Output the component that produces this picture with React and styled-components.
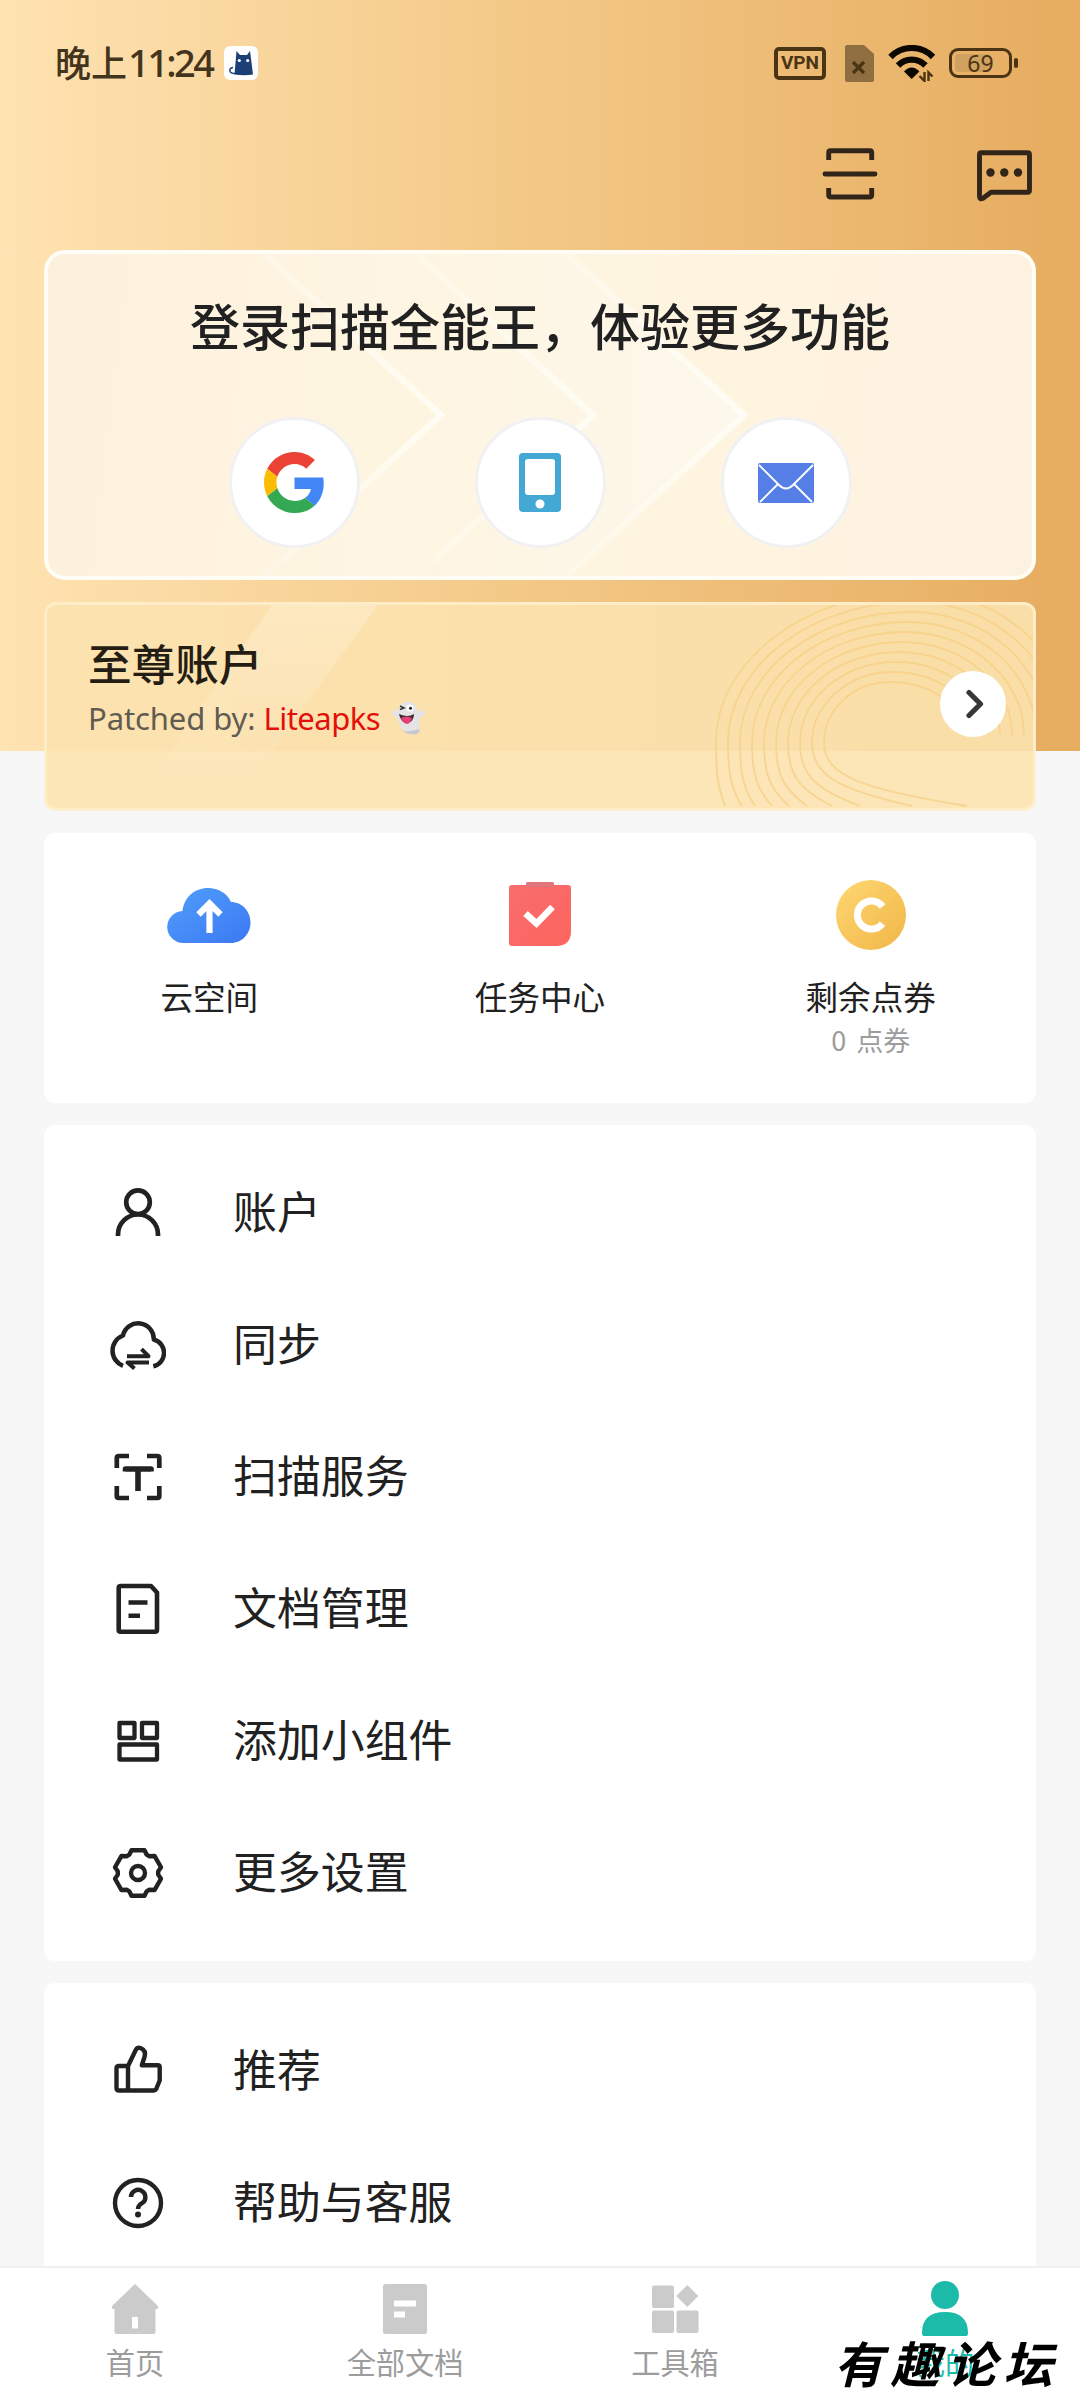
import React from "react";
import styled, { createGlobalStyle, css } from "styled-components";

const GlobalStyle = createGlobalStyle`
  * {
    box-sizing: border-box;
  }
  body {
    margin: 0;
    font-family: "Noto Sans CJK SC", "Noto Sans", sans-serif;
    color: #212121;
  }
  svg {
    display: block;
    flex: none;
  }
`;

const Screen = styled.div`
  position: relative;
  display: flex;
  flex-direction: column;
  width: 1080px;
  height: 2400px;
  overflow: hidden;
  background: linear-gradient(90deg, #ffe3b2 0%, #f3c886 50%, #e6ac60 100%) 0 0 /
    100% 751px no-repeat #f7f7f7;
`;

const StatusBar = styled.header`
  display: flex;
  align-items: center;
  height: 126px;
  padding: 0 62px 0 55px;
  color: #43341d;
`;

const Clock = styled.div`
  display: flex;
  align-items: center;
  font-size: 36px;
  font-weight: 500;
  line-height: 40px;
`;

const ClockText = styled.span`
  width: 169px;
  margin-top: -3px;
  white-space: nowrap;
`;

const ClockDigits = styled.span`
  margin-left: 1px;
  font-family: "Noto Sans", sans-serif;
  font-size: 38px;
  letter-spacing: -2.6px;
`;

const StatusIcons = styled.div`
  display: flex;
  align-items: center;
  margin-left: auto;
`;

const VpnBadge = styled.span`
  display: flex;
  align-items: center;
  justify-content: center;
  width: 52px;
  height: 33px;
  margin-right: 19px;
  border: 4px solid #4a3413;
  border-radius: 5px;
  color: #4a3413;
  font: 700 19px/20px "Roboto", sans-serif;
`;

const Battery = styled.span`
  position: relative;
  display: flex;
  align-items: center;
  justify-content: center;
  width: 63px;
  height: 30px;
  margin: 0 6px 0 13px;
  border: 3px solid #4a3413;
  border-radius: 9px;
  background: linear-gradient(90deg, #d0a15f 68%, transparent 68%) content-box;
  padding: 3px;
  font: 400 23px/24px "Noto Sans", sans-serif;
  color: #4a3413;

  &::after {
    content: "";
    position: absolute;
    right: -9px;
    top: 7px;
    width: 4px;
    height: 10px;
    border-radius: 2px;
    background: #4a3413;
  }
`;

const Toolbar = styled.div`
  display: flex;
  align-items: center;
  justify-content: flex-end;
  gap: 94px;
  height: 96px;
  padding-right: 46px;
`;

const Content = styled.main`
  flex: 1;
  min-height: 0;
  display: flex;
  flex-direction: column;
  gap: 22px;
  padding: 28px 44px 0;
  overflow: hidden;
`;

const Card = styled.section`
  flex: none;
  border-radius: 11px;
  background: #fff;
`;

const LoginCard = styled(Card)`
  position: relative;
  height: 330px;
  padding-top: 40px;
  border: 4px solid #fffdf6;
  border-radius: 21px;
  background: linear-gradient(97deg, #fdf1de 0%, #fef5e1 35%, #fef4e0 70%, #fdf1df 100%);
  overflow: hidden;
`;

const PremiumCard = styled(Card)`
  position: relative;
  height: 209px;
  padding: 29px 27px 0 41px;
  background: rgba(252, 226, 175, 0.907);
  border: 3px solid rgba(255, 240, 208, 0.75);
  border-radius: 12px;
  overflow: hidden;
`;

const CardArt = styled.svg`
  position: absolute;
  top: 0;
  left: 0;
`;

const LoginTitle = styled.h1`
  position: relative;
  margin: 0;
  font-size: 50px;
  font-weight: 500;
  line-height: 60px;
  text-align: center;
`;

const LoginOptions = styled.div`
  position: relative;
  display: flex;
  justify-content: center;
  gap: 115px;
  margin-top: 63px;
`;

const RoundButton = styled.button`
  display: flex;
  align-items: center;
  justify-content: center;
  width: 131px;
  height: 131px;
  padding: 0;
  border: 3px solid #f1f1f3;
  border-radius: 50%;
  background: #fff;
`;

const PremiumBody = styled.div`
  position: relative;
  display: flex;
  justify-content: space-between;
`;

const PremiumTitle = styled.h2`
  margin: 0;
  font-size: 43.6px;
  font-weight: 500;
  line-height: 56px;
  color: #241d14;
`;

const PatchedBy = styled.p`
  display: flex;
  align-items: center;
  margin: 4px 0 0;
  font-family: "Noto Sans", sans-serif;
  font-size: 31px;
  line-height: 48px;
  letter-spacing: -0.1px;
  white-space: pre;
  color: #625b51;

  b {
    font-weight: 400;
    letter-spacing: -0.5px;
    color: #e30f0a;
    margin-right: 10px;
  }
`;

const ArrowButton = styled.button`
  display: flex;
  align-items: center;
  justify-content: center;
  width: 66px;
  height: 66px;
  margin-top: 37px;
  padding: 0;
  border: 0;
  border-radius: 50%;
  background: #fff;
`;

const Services = styled(Card)`
  display: grid;
  grid-template-columns: repeat(3, 1fr);
  height: 270px;
  padding-top: 40px;
`;

const Service = styled.div`
  display: flex;
  flex-direction: column;
  align-items: center;
  font-size: 32.6px;
  line-height: 44px;

  svg {
    margin-bottom: 17px;
  }
  small {
    font-size: 27px;
    color: #9c9c9c;
    word-spacing: 4px;
  }
`;

const Menu = styled(Card)`
  padding: 22px 0;
`;

const MenuRow = styled.div`
  display: flex;
  align-items: center;
  height: 132px;
  padding-left: 66px;
  gap: 67px;
  font-size: 43.9px;
  line-height: 60px;

  span {
    margin-top: -6px;
  }
`;

const TabBar = styled.nav`
  flex: none;
  display: grid;
  grid-template-columns: repeat(4, 1fr);
  height: 134px;
  padding-top: 13px;
  border-top: 2px solid #efefef;
  background: #fff;
`;

const Tab = styled.div`
  display: flex;
  flex-direction: column;
  align-items: center;
  font-size: 29.2px;
  line-height: 40px;
  color: #9c9c9c;

  svg {
    fill: #cbcbcb;
    margin-bottom: 4px;
  }
  ${({ $active }) =>
    $active &&
    css`
      color: #1cbba9;
      svg {
        fill: #1cbba9;
      }
    `}
`;

const SiteMark = styled.div`
  position: absolute;
  right: 20px;
  bottom: 7px;
  font-size: 49px;
  font-weight: 700;
  font-style: italic;
  line-height: 62px;
  letter-spacing: 7.5px;
  color: #000;
`;

const Line = ({ children, size = 56, width = 4.4, ...rest }) => (
  <svg
    width={size}
    height={size}
    viewBox={`0 0 ${size} ${size}`}
    fill="none"
    stroke="#222"
    strokeWidth={width}
    strokeLinejoin="round"
    {...rest}
  >
    {children}
  </svg>
);

const AppBadge = () => (
  <svg width="34" height="34" viewBox="0 0 34 34">
    <rect width="34" height="34" rx="6" fill="#fff" />
    <path
      d="M12.500 5l3.500 4h7L26 5l.8 6L29 28.500q-9 1.500-18.500 0L12 11z"
      fill="#1c3f76"
    />
    <path d="M11 27.500c-6 0-7-5-2-6" fill="none" stroke="#1c3f76" strokeWidth="1.500" />
    <circle cx="15.300" cy="14.500" r="1.600" fill="#fff" />
    <circle cx="23.700" cy="14.500" r="1.600" fill="#fff" />
  </svg>
);

const SimIcon = () => (
  <svg width="29" height="37" viewBox="0 0 29 37">
    <path d="M2 0h17l10 9v26q0 2-2 2H2q-2 0-2-2V2q0-2 2-2z" fill="#8f6f42" />
    <path d="M8 17l11 11M19 17L8 28" stroke="#4a3413" strokeWidth="3.200" />
  </svg>
);

const WifiSvg = styled.svg`
  margin-left: 14px;
`;

const WifiIcon = () => (
  <WifiSvg width="48" height="37" viewBox="0 0 48 37">
    <g fill="none" stroke="#0c0701">
      <path d="M2.500 12A29.500 29.500 0 0 1 45 12" strokeWidth="6.200" />
      <path d="M10 20.500A19 19 0 0 1 37.500 20.500" strokeWidth="6.200" />
    </g>
    <path d="M16 26.500q7.700-8 15.400 0L23.700 34z" fill="#0c0701" />
    <path d="M36.500 27v9l-5-5M40.500 36v-8.500l4 4" fill="none" stroke="#4a3413" strokeWidth="2.400" />
  </WifiSvg>
);

const ScanIcon = () => (
  <Line size={60} width={4.900} stroke="#31251a">
    <path d="M8.700 16V8.700q0-2 2-2h39q2 0 2 2V16M8.700 44v7q0 2 2 2h39q2 0 2-2v-7" />
    <path d="M5 30h50" strokeLinecap="round" />
  </Line>
);

const ChatIcon = () => (
  <Line size={60} width={4.900} stroke="#31251a">
    <path d="M7.500 8.800h46q2 0 2 2v35.500q0 2-2 2H17l-8 6q-3.500 1.500-3.500-2V10.800q0-2 2-2z" />
    <g fill="#31251a" stroke="none">
      <circle cx="16.500" cy="28.500" r="4.200" />
      <circle cx="30.300" cy="28.500" r="4.200" />
      <circle cx="44" cy="28.500" r="4.200" />
    </g>
  </Line>
);

const GoogleIcon = () => (
  <svg width="61" height="61" viewBox="0 0 48 48">
    <path
      fill="#EA4335"
      d="M24 9.500c3.540 0 6.710 1.220 9.210 3.600l6.850-6.850C35.900 2.380 30.470 0 24 0 14.620 0 6.510 5.380 2.560 13.220l7.980 6.190C12.430 13.720 17.740 9.500 24 9.500z"
    />
    <path
      fill="#4285F4"
      d="M46.980 24.550c0-1.570-.15-3.090-.38-4.550H24v9.020h12.940c-.58 2.960-2.260 5.480-4.780 7.180l7.730 6c4.510-4.180 7.090-10.360 7.090-17.650z"
    />
    <path
      fill="#FBBC05"
      d="M10.530 28.590c-.48-1.450-.76-2.990-.76-4.590s.27-3.140.76-4.590l-7.980-6.190C.92 16.460 0 20.120 0 24c0 3.880.92 7.540 2.560 10.780l7.970-6.190z"
    />
    <path
      fill="#34A853"
      d="M24 48c6.480 0 11.930-2.130 15.890-5.810l-7.730-6c-2.150 1.450-4.920 2.300-8.160 2.300-6.260 0-11.570-4.220-13.470-9.910l-7.980 6.190C6.510 42.620 14.620 48 24 48z"
    />
  </svg>
);

// three stacked arrowheads behind the login card
const LoginArt = () => (
  <CardArt width="984" height="322" viewBox="48 254 984 322">
    <defs>
      <linearGradient id="sheen">
        <stop offset="0" stopColor="#fdf9ef" stopOpacity="0" />
        <stop offset="1" stopColor="#fdf9ef" stopOpacity=".85" />
      </linearGradient>
      <linearGradient id="edge" x1="0" y1="0" x2="0" y2="1">
        <stop offset="0" stopColor="#fffdf5" stopOpacity=".3" />
        <stop offset=".5" stopColor="#fffdf5" stopOpacity=".9" />
        <stop offset="1" stopColor="#fffdf5" stopOpacity=".25" />
      </linearGradient>
    </defs>
    <path d="M417 254h151l178 161-178 161H417l175-161z" fill="url(#sheen)" />
    <path d="M265 254h152l175 161-175 161H265l176-161z" fill="url(#sheen)" opacity=".3" />
    {[265, 417, 568].map((x) => (
      <path
        key={x}
        d={`M${x} 254l176 161-176 161`}
        fill="none"
        stroke="url(#edge)"
        strokeWidth="6.500"
      />
    ))}
  </CardArt>
);

const ringEnds = [923, 868, 816, 788, 763, 745, 728, 711, 698, 681];

const ringPath = (end, i) => {
  const left = 780 - 12 * i;
  const right = 920 + 12 * i;
  const top = 80 - 10 * i;
  const cx = 846 + 3 * i;
  return `M${right} 133C${right} ${133 - 0.55 * (133 - top)} ${
    cx + 0.55 * (right - cx)
  } ${top} ${cx} ${top}C${cx - 0.55 * (cx - left)} ${top} ${left} ${
    141 - 0.55 * (141 - top)
  } ${left} 141C${left} 175 ${left + (end - left) * 0.3} 188 ${end} 204`;
};

const PremiumArt = () => (
  <CardArt width="986" height="203" viewBox="3 3 986 203">
    <defs>
      <linearGradient id="beam" x1="0" y1="0" x2="0" y2="1">
        <stop offset="0" stopColor="#fff" stopOpacity=".24" />
        <stop offset="1" stopColor="#fff" stopOpacity=".02" />
      </linearGradient>
    </defs>
    <path d="M230 0h106L210 175H108z" fill="url(#beam)" />
    <g fill="none" stroke="#f6cf80" strokeWidth="1.800" opacity=".7">
      {ringEnds.map((end, i) => (
        <path key={end} d={ringPath(end, i)} />
      ))}
    </g>
  </CardArt>
);

const PhoneIcon = () => (
  <svg width="42" height="59" viewBox="0 0 42 59">
    <rect width="42" height="59" rx="4" fill="#43a9d4" />
    <rect x="6" y="6" width="30" height="36" rx="3" fill="#fff" />
    <circle cx="21" cy="51" r="4.500" fill="#fff" />
  </svg>
);

const MailIcon = () => (
  <svg width="56" height="40" viewBox="0 0 56 40">
    <rect width="56" height="40" rx="2" fill="#557fe6" />
    <path
      d="M1 2l20 20q7 7 14 0L55 2M2 39l18-18M54 39L36 21"
      fill="none"
      stroke="#fff"
      strokeWidth="1.800"
    />
  </svg>
);

const GhostIcon = () => (
  <svg width="36" height="36" viewBox="0 0 36 36">
    <path
      d="M16 2c7-1 11 4 12 10 3-1 6-2 7-1s-1 5-6 8c0 6 1 8 1 11 0 4-5 5-9 4-7-1-12-8-13-15-4-2-7-6-6-8s4-1 6 1C8 6 11 3 16 2z"
      fill="#e4e3e5"
    />
    <path d="M13 31c5 1 9 0 16-2 2 4-3 6-8 5-3 0-6-1-8-3z" fill="#c5c9cd" />
    <path d="M9 14q9 4 15 0c0 5-3 9-7 9s-7-4-8-9z" fill="#3a2b30" />
    <path d="M11 18q5-3 11 0c-1 3-3 6-5 6s-5-3-6-6z" fill="#ec3c78" />
    <circle cx="20" cy="8" r="3.600" fill="#fff" />
    <circle cx="20.500" cy="8.200" r="1.500" fill="#222" />
    <path d="M10 6l4 2-4 1.500" fill="none" stroke="#333" strokeWidth="1.500" />
  </svg>
);

const CloudUpload = () => (
  <svg width="84" height="84" viewBox="0 0 84 84">
    <defs>
      <linearGradient id="blue" x1="0" y1="0" x2="1" y2="1">
        <stop offset="0" stopColor="#509ffb" />
        <stop offset="1" stopColor="#3c78f4" />
      </linearGradient>
    </defs>
    <path
      d="M17 70A16 16 0 0 1 15.500 38C17 24 28 15 41 15c10 0 19 5 23 14 11 0 19.500 9 19.500 20.500S75 70 64 70z"
      fill="url(#blue)"
    />
    <path d="M42.500 60V32M31.500 41.500l11-11 11 11" fill="none" stroke="#fff" strokeWidth="6.200" />
  </svg>
);

const TaskIcon = () => (
  <svg width="84" height="84" viewBox="0 0 84 84">
    <defs>
      <linearGradient id="red" x1="0" y1="0" x2="1" y2="1">
        <stop offset="0" stopColor="#f66d6d" />
        <stop offset="1" stopColor="#ff655f" />
      </linearGradient>
    </defs>
    <path
      d="M11 15q0-3 3-3h56q3 0 3 3v43q0 15-15 15H14q-3 0-3-3z"
      fill="url(#red)"
    />
    <rect x="28" y="9" width="28" height="5" rx="1.500" fill="#e0767b" />
    <path d="M27.500 40.500l11 10L54.500 34" fill="none" stroke="#fff" strokeWidth="6.500" />
  </svg>
);

const CoinIcon = () => (
  <svg width="84" height="84" viewBox="0 0 84 84">
    <defs>
      <linearGradient id="gold" x1="0" y1="0" x2="1" y2="1">
        <stop offset="0" stopColor="#ffd672" />
        <stop offset="1" stopColor="#f0b748" />
      </linearGradient>
    </defs>
    <circle cx="42" cy="42" r="35" fill="url(#gold)" />
    <path d="M53.500 33.500A14 14 0 1 0 53.500 50.500" fill="none" stroke="#fff" strokeWidth="7" />
  </svg>
);

const gearPoints = [0, 60, 120, 180, 240, 300]
  .flatMap((deg) => {
    const a = (deg * Math.PI) / 180;
    return [
      [-8.7, -18.3],
      [-6.5, -22.8],
      [6.5, -22.8],
      [8.7, -18.3],
    ].map(([x, y]) =>
      [
        28 + x * Math.cos(a) - y * Math.sin(a),
        28 + x * Math.sin(a) + y * Math.cos(a),
      ].join(",")
    );
  })
  .join(" ");

const UserIcon = () => (
  <Line width={4.700}>
    <circle cx="28" cy="17.200" r="11.800" />
    <path d="M8 51v-1.500a20 20 0 0 1 40 0V51" />
  </Line>
);

const SyncIcon = () => (
  <Line width={4.500}>
    <path d="M13 48.800A16.200 16.200 0 0 1 13 18.500A15.600 15.600 0 0 1 43.800 22.500A13.800 13.800 0 0 1 43.300 49.300" />
    <path d="M17 39.200h21.500l-7-7M39 45.500H17.500l7 6" strokeWidth="4" />
  </Line>
);

const TextScanIcon = () => (
  <Line width={4.700}>
    <path d="M6.800 19V9q0-2 2-2H19M37 7h10.300q2 0 2 2v10M49.300 37v10q0 2-2 2H37M19 49H8.800q-2 0-2-2V37" />
    <path d="M15.500 22.500v-2.500h25.500v2.500M28 20v22" strokeWidth="5.600" />
  </Line>
);

const DocIcon = () => (
  <Line width={4.600}>
    <path d="M10.700 5H41l6 6.500v37.300q0 2-2 2H10.700q-2 0-2-2V7q0-2 2-2z" />
    <path d="M18.500 21.500h19M18.500 34.700h11.500" />
  </Line>
);

const WidgetIcon = () => (
  <Line width={4.300}>
    <path d="M9.500 10H24.500v15H9.500zM32 10H47v15H32zM9.500 31.500H47v15H9.500z" />
  </Line>
);

const GearIcon = () => (
  <Line>
    <polygon points={gearPoints} />
    <circle cx="28" cy="28" r="7" />
  </Line>
);

const ThumbIcon = () => (
  <Line>
    <path d="M18 23l7.500-15.500q1.500-3.500 5-2.500 6 2.500 4 9L31.800 22.300h15.900q2 0 2 2V37.500l-3.500 8.500q-.8 1.500-2.500 1.500H9q-2.500 0-2.500-2.500V25.300q0-2.300 2.500-2.300zM18 23v24" />
  </Line>
);

const HelpIcon = () => (
  <Line>
    <circle cx="28" cy="28" r="23" />
    <path d="M21 22a7.200 7.200 0 1 1 11 6.200Q28 30.500 28 34" />
    <circle cx="28" cy="39.500" r="3" fill="#222" stroke="none" />
  </Line>
);

const TabIcon = ({ children }) => (
  <svg width="56" height="56" viewBox="0 0 56 56">
    {children}
  </svg>
);

const services = [
  { label: "云空间", Icon: CloudUpload },
  { label: "任务中心", Icon: TaskIcon },
  { label: "剩余点券", Icon: CoinIcon, note: "0 点券" },
];

const settings = [
  { label: "账户", Icon: UserIcon },
  { label: "同步", Icon: SyncIcon },
  { label: "扫描服务", Icon: TextScanIcon },
  { label: "文档管理", Icon: DocIcon },
  { label: "添加小组件", Icon: WidgetIcon },
  { label: "更多设置", Icon: GearIcon },
];

const support = [
  { label: "推荐", Icon: ThumbIcon },
  { label: "帮助与客服", Icon: HelpIcon },
];

const tabs = [
  {
    label: "首页",
    icon: (
      <path
        fillRule="evenodd"
        d="M28 3l23 22q1 2-1 3h-1.500v23q0 2-2 2h-37q-2 0-2-2V28H6q-2-1-1-3zM25 36v11.500h6V36z"
      />
    ),
  },
  {
    label: "全部文档",
    icon: (
      <path
        fillRule="evenodd"
        d="M8.500 3h39q2.500 0 2.500 2.500v45q0 2.500-2.500 2.500h-39Q6 53 6 50.500v-45Q6 3 8.500 3zM17 19.500v6h22v-6zM17 30.500v6h11v-6z"
      />
    ),
  },
  {
    label: "工具箱",
    icon: (
      <>
        <rect x="5" y="4.500" width="22" height="22.500" rx="2" />
        <rect x="5" y="29.500" width="22" height="22.500" rx="2" />
        <rect x="29.500" y="29.500" width="22" height="22.500" rx="2" />
        <path d="M40.300 4l11 11-11 11-11-11z" />
      </>
    ),
  },
  {
    label: "我的",
    active: true,
    icon: (
      <>
        <circle cx="28" cy="14" r="14" />
        <path d="M5 52Q5 31 28 31t23 21q0 3-2 3H7q-2 0-2-3z" />
      </>
    ),
  },
];

const MenuList = ({ items }) => (
  <Menu>
    {items.map(({ label, Icon }) => (
      <MenuRow key={label}>
        <Icon />
        <span>{label}</span>
      </MenuRow>
    ))}
  </Menu>
);

const App = () => {
  return (
    <Screen>
      <GlobalStyle />
      <StatusBar>
        <Clock>
          <ClockText>
            晚上<ClockDigits>11:24</ClockDigits>
          </ClockText>
          <AppBadge />
        </Clock>
        <StatusIcons>
          <VpnBadge>VPN</VpnBadge>
          <SimIcon />
          <WifiIcon />
          <Battery>69</Battery>
        </StatusIcons>
      </StatusBar>
      <Toolbar>
        <ScanIcon />
        <ChatIcon />
      </Toolbar>
      <Content>
        <LoginCard>
          <LoginArt />
          <LoginTitle>登录扫描全能王，体验更多功能</LoginTitle>
          <LoginOptions>
            <RoundButton>
              <GoogleIcon />
            </RoundButton>
            <RoundButton>
              <PhoneIcon />
            </RoundButton>
            <RoundButton>
              <MailIcon />
            </RoundButton>
          </LoginOptions>
        </LoginCard>
        <PremiumCard>
          <PremiumArt />
          <PremiumBody>
            <div>
              <PremiumTitle>至尊账户</PremiumTitle>
              <PatchedBy>
                {"Patched by: "}
                <b>Liteapks</b>
                <GhostIcon />
              </PatchedBy>
            </div>
            <ArrowButton>
              <Line size={30} width={5.200} stroke="#383838" strokeLinecap="round">
                <path d="M11 3.500l11.500 11.500L11 26.500" />
              </Line>
            </ArrowButton>
          </PremiumBody>
        </PremiumCard>
        <Services>
          {services.map(({ label, Icon, note }) => (
            <Service key={label}>
              <Icon />
              {label}
              {note && <small>{note}</small>}
            </Service>
          ))}
        </Services>
        <MenuList items={settings} />
        <MenuList items={support} />
      </Content>
      <TabBar>
        {tabs.map(({ label, icon, active }) => (
          <Tab key={label} $active={active}>
            <TabIcon>{icon}</TabIcon>
            {label}
          </Tab>
        ))}
      </TabBar>
      <SiteMark>有趣论坛</SiteMark>
    </Screen>
  );
};

export default App;
